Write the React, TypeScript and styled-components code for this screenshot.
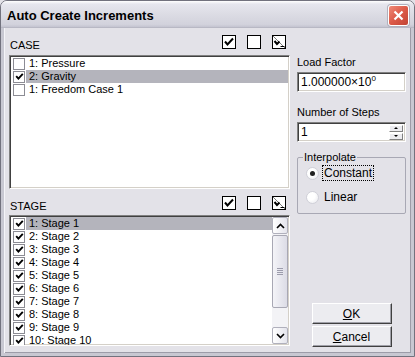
import { createGlobalStyle, styled } from 'styled-components';

const GlobalStyle = createGlobalStyle`
  html, body {
    margin: 0;
    padding: 0;
    background: #e3e2e8;
  }
  * {
    box-sizing: border-box;
  }
`;

const FONT = `"Liberation Sans", Arial, sans-serif`;

const cases = [
  { id: 'c1', label: '1: Pressure', checked: false, selected: false },
  { id: 'c2', label: '2: Gravity', checked: true, selected: true },
  { id: 'c3', label: '1: Freedom Case 1', checked: false, selected: false },
];

const stages = Array.from({ length: 10 }, (_, i) => ({
  id: `s${i + 1}`,
  label: `${i + 1}: Stage ${i + 1}`,
  checked: true,
  selected: i === 0,
}));

const CheckAllIcon = () => (
  <svg width="14" height="14" viewBox="0 0 14 14">
    <rect x="0.5" y="0.5" width="13" height="13" fill="#fff" stroke="#000" />
    <path d="M3 6.5 L5.5 9.5 L11 3.5" fill="none" stroke="#000" strokeWidth="2" />
  </svg>
);

const UncheckAllIcon = () => (
  <svg width="14" height="14" viewBox="0 0 14 14">
    <rect x="0.5" y="0.5" width="13" height="13" fill="#fff" stroke="#000" />
  </svg>
);

const ToggleIcon = () => (
  <svg width="14" height="14" viewBox="0 0 14 14">
    <rect x="0.5" y="0.5" width="13" height="13" fill="#fff" stroke="#000" />
    <path d="M1 1 L13 13" stroke="#7a7a7a" strokeWidth="1" />
    <path d="M2.5 6 L5 9 L7.5 6.5" fill="none" stroke="#000" strokeWidth="2" />
    <path d="M8.5 11.5 L12.5 11.5" stroke="#000" strokeWidth="1" />
  </svg>
);

const SmallCheck = () => (
  <svg width="9" height="9" viewBox="0 0 9 9">
    <path d="M1.2 4.2 L3.4 6.6 L7.8 1.8" fill="none" stroke="#000" strokeWidth="1.9" />
  </svg>
);

const ArrowUp = () => (
  <svg width="9" height="6" viewBox="0 0 9 6">
    <path d="M1 5 L4.5 1.5 L8 5" fill="none" stroke="#000" strokeWidth="1.6" />
  </svg>
);

const ArrowDown = () => (
  <svg width="9" height="6" viewBox="0 0 9 6">
    <path d="M1 1 L4.5 4.5 L8 1" fill="none" stroke="#000" strokeWidth="1.6" />
  </svg>
);

const CloseX = () => (
  <svg width="11" height="11" viewBox="0 0 11 11">
    <path d="M1.5 1.5 L9.5 9.5 M9.5 1.5 L1.5 9.5" stroke="#fff" strokeWidth="2.2" />
  </svg>
);

type ListItem = { id: string; label: string; checked: boolean; selected: boolean };

const CheckList = ({ items, withScroll, height }: { items: ListItem[]; withScroll?: boolean; height: number }) => (
  <ListBox $h={height}>
    <ListInner>
      {items.map((it) => (
        <Row key={it.id}>
          <RowCheck>{it.checked && <SmallCheck />}</RowCheck>
          <RowText $selected={it.selected}>{it.label}</RowText>
        </Row>
      ))}
    </ListInner>
    {withScroll && (
      <ScrollBar>
        <ScrollBtn>
          <ArrowUp />
        </ScrollBtn>
        <Thumb>
          <Grip />
          <Grip />
          <Grip />
          <Grip />
        </Thumb>
        <Track />
        <ScrollBtn>
          <ArrowDown />
        </ScrollBtn>
      </ScrollBar>
    )}
  </ListBox>
);

const SectionHeader = ({ title, top, height }: { title: string; top: number; height: number }) => (
  <Header $h={height}>
    <HeaderLabel $top={top + 4}>{title}</HeaderLabel>
    <HeaderIcons $top={top}>
      <CheckAllIcon />
      <UncheckAllIcon />
      <ToggleIcon />
    </HeaderIcons>
  </Header>
);

const App = () => {
  return (
    <>
      <GlobalStyle />
      <Window>
        <TitleBar>
          <Title>Auto Create Increments</Title>
          <CloseButton>
            <CloseX />
          </CloseButton>
        </TitleBar>
        <Body>
          <LeftColumn>
            <SectionHeader title="CASE" top={1} height={21} />
            <CheckList items={cases} height={134} />
            <SectionHeader title="STAGE" top={7} height={26} />
            <CheckList items={stages} withScroll height={131} />
          </LeftColumn>
          <RightColumn>
            <FieldLabel>Load Factor</FieldLabel>
            <TextField>
              <Value>
                1.000000×10<Sup>0</Sup>
              </Value>
            </TextField>
            <FieldLabel $gap={14}>Number of Steps</FieldLabel>
            <TextField>
              <Value>1</Value>
              <Spin>
                <SpinBtn>
                  <Tri $up />
                </SpinBtn>
                <SpinBtn>
                  <Tri />
                </SpinBtn>
              </Spin>
            </TextField>
            <Group>
              <Legend>Interpolate</Legend>
              <RadioRow>
                <Radio $checked />
                <RadioText $focused>Constant</RadioText>
              </RadioRow>
              <RadioRow>
                <Radio />
                <RadioText>Linear</RadioText>
              </RadioRow>
            </Group>
            <Buttons>
              <Button>
                <u>O</u>K
              </Button>
              <Button>
                <u>C</u>ancel
              </Button>
            </Buttons>
          </RightColumn>
        </Body>
      </Window>
    </>
  );
};

export default App;

const Window = styled.div`
  width: 415px;
  height: 357px;
  display: flex;
  flex-direction: column;
  border: 1px solid #72727e;
  border-radius: 7px 7px 0 0;
  background: #e3e2e8;
  font-family: ${FONT};
  font-size: 11px;
  color: #000;
  overflow: hidden;
`;

const TitleBar = styled.div`
  height: 27px;
  flex: none;
  display: flex;
  align-items: center;
  justify-content: space-between;
  padding: 0 5px 0 6px;
  background: linear-gradient(#ffffff 0%, #e6e6ee 12%, #dcdce4 50%, #d2d2dc 90%, #c4c4d0 100%);
  border-bottom: 1px solid #b8b8c4;
`;

const Title = styled.span`
  font-family: ${FONT};
  font-weight: bold;
  font-size: 13px;
  color: #000;
  margin-top: 3px;
`;

const CloseButton = styled.div`
  width: 21px;
  height: 21px;
  margin-top: 3px;
  border: 1px solid #fff;
  border-radius: 3px;
  background: linear-gradient(135deg, #f08a78 0%, #dc5a48 50%, #c24434 100%);
  display: flex;
  align-items: center;
  justify-content: center;
  box-shadow: 0 0 0 1px #b0b0bc;
`;

const Body = styled.div`
  flex: 1;
  display: flex;
  gap: 7px;
  padding: 6px 5px 6px 5px;
  border-left: 3px solid #c8c8d2;
  border-right: 3px solid #c8c8d2;
  border-bottom: 3px solid #c8c8d2;
  box-shadow: inset 1px 0 0 #f4f4f8, inset -1px 0 0 #9c9ca8, inset 0 -1px 0 #9c9ca8;
`;

const LeftColumn = styled.div`
  width: 281px;
  display: flex;
  flex-direction: column;
`;

const Header = styled.div<{ $h: number }>`
  display: flex;
  align-items: flex-start;
  height: ${(p) => p.$h}px;
  flex: none;
`;

const HeaderLabel = styled.span<{ $top: number }>`
  line-height: 13px;
  padding-left: 1px;
  margin-top: ${(p) => p.$top}px;
`;

const HeaderIcons = styled.div<{ $top: number }>`
  margin-left: auto;
  margin-top: ${(p) => p.$top}px;
  padding-right: 4px;
  display: flex;
  gap: 11px;
  & > svg {
    display: block;
  }
`;

const ListBox = styled.div<{ $h: number }>`
  flex: none;
  height: ${(p) => p.$h}px;
  display: flex;
  background: #fff;
  border-top: 1px solid #808080;
  border-left: 1px solid #808080;
  border-right: 1px solid #fff;
  border-bottom: 1px solid #fff;
  box-shadow: inset 1px 1px 0 #404040, inset -1px -1px 0 #d4d0c8;
  padding: 1px 1px 1px 3px;
  overflow: hidden;
`;

const ListInner = styled.div`
  flex: 1;
  display: flex;
  flex-direction: column;
`;

const Row = styled.div`
  height: 13px;
  display: flex;
  align-items: center;
  flex: none;
`;

const RowCheck = styled.span`
  width: 12px;
  height: 12px;
  flex: none;
  border: 1px solid #8c8c94;
  background: #fff;
  display: flex;
  align-items: center;
  justify-content: center;
`;

const RowText = styled.span<{ $selected?: boolean }>`
  flex: 1;
  height: 13px;
  line-height: 13px;
  margin-left: 1px;
  padding-left: 3px;
  background: ${(p) => (p.$selected ? '#b4b4bc' : 'transparent')};
  white-space: nowrap;
`;

const ScrollBar = styled.div`
  width: 16px;
  flex: none;
  display: flex;
  flex-direction: column;
  background: #f3f3f6;
`;

const ScrollBtn = styled.div`
  height: 17px;
  flex: none;
  border: 1px solid #b0b0bc;
  border-radius: 2px;
  background: linear-gradient(90deg, #ffffff, #e4e4ec);
  display: flex;
  align-items: center;
  justify-content: center;
`;

const Thumb = styled.div`
  height: 73px;
  flex: none;
  margin-top: 1px;
  border: 1px solid #a8a8b4;
  border-radius: 2px;
  background: linear-gradient(90deg, #f4f4f8, #dcdce6);
  display: flex;
  flex-direction: column;
  align-items: center;
  justify-content: center;
  gap: 1px;
`;

const Grip = styled.span`
  width: 6px;
  height: 1px;
  background: #9c9cac;
`;

const Track = styled.div`
  flex: 1;
`;

const RightColumn = styled.div`
  flex: 1;
  display: flex;
  flex-direction: column;
  padding-top: 22px;
`;

const FieldLabel = styled.div<{ $gap?: number }>`
  line-height: 13px;
  margin-top: ${(p) => p.$gap ?? 0}px;
`;

const TextField = styled.div`
  height: 20px;
  margin-top: 3px;
  display: flex;
  align-items: center;
  padding-left: 3px;
  background: #fff;
  border-top: 1px solid #808080;
  border-left: 1px solid #808080;
  border-right: 1px solid #fff;
  border-bottom: 1px solid #fff;
  box-shadow: inset 1px 1px 0 #404040, inset -1px -1px 0 #d4d0c8;
  font-size: 12px;
`;

const Value = styled.span`
  flex: 1;
  line-height: 14px;
  white-space: nowrap;
`;

const Sup = styled.sup`
  font-size: 8px;
  line-height: 0;
  vertical-align: 5px;
`;

const Spin = styled.div`
  width: 14px;
  margin-right: 2px;
  display: flex;
  flex-direction: column;
  gap: 1px;
`;

const SpinBtn = styled.div`
  height: 7px;
  background: #ececf0;
  border: 1px solid;
  border-color: #fff #808080 #808080 #fff;
  display: flex;
  align-items: center;
  justify-content: center;
`;

const Tri = styled.span<{ $up?: boolean }>`
  width: 0;
  height: 0;
  border-left: 2px solid transparent;
  border-right: 2px solid transparent;
  ${(p) => (p.$up ? 'border-bottom: 2px solid #000;' : 'border-top: 2px solid #000;')}
`;

const Group = styled.div`
  position: relative;
  margin-top: 15px;
  height: 57px;
  border: 1px solid #a8a8b4;
  border-radius: 2px;
  padding: 8px 0 0 8px;
  display: flex;
  flex-direction: column;
  gap: 10px;
`;

const Legend = styled.span`
  position: absolute;
  top: -7px;
  left: 5px;
  padding: 0 1px;
  background: #e3e2e8;
  line-height: 13px;
`;

const RadioRow = styled.div`
  display: flex;
  align-items: center;
  height: 14px;
  gap: 4px;
`;

const Radio = styled.span<{ $checked?: boolean }>`
  width: 13px;
  height: 13px;
  border-radius: 50%;
  background: radial-gradient(circle at 35% 35%, #ffffff 40%, #e6e6ec 100%);
  border: 1px solid #d0d0d8;
  display: flex;
  align-items: center;
  justify-content: center;
  &::after {
    content: '';
    width: 5px;
    height: 5px;
    border-radius: 50%;
    background: ${(p) => (p.$checked ? '#202020' : 'transparent')};
  }
`;

const RadioText = styled.span<{ $focused?: boolean }>`
  font-size: 12px;
  line-height: 14px;
  padding: 0 1px;
  outline: ${(p) => (p.$focused ? '1px dotted #000' : 'none')};
`;

const Buttons = styled.div`
  margin-top: auto;
  display: flex;
  flex-direction: column;
  align-items: center;
  gap: 2px;
`;

const Button = styled.div`
  width: 80px;
  height: 21px;
  display: flex;
  align-items: center;
  justify-content: center;
  background: #ececf0;
  border: 1px solid;
  border-color: #fff #404040 #404040 #fff;
  box-shadow: inset -1px -1px 0 #a0a0a8;
  font-size: 12px;
`;
